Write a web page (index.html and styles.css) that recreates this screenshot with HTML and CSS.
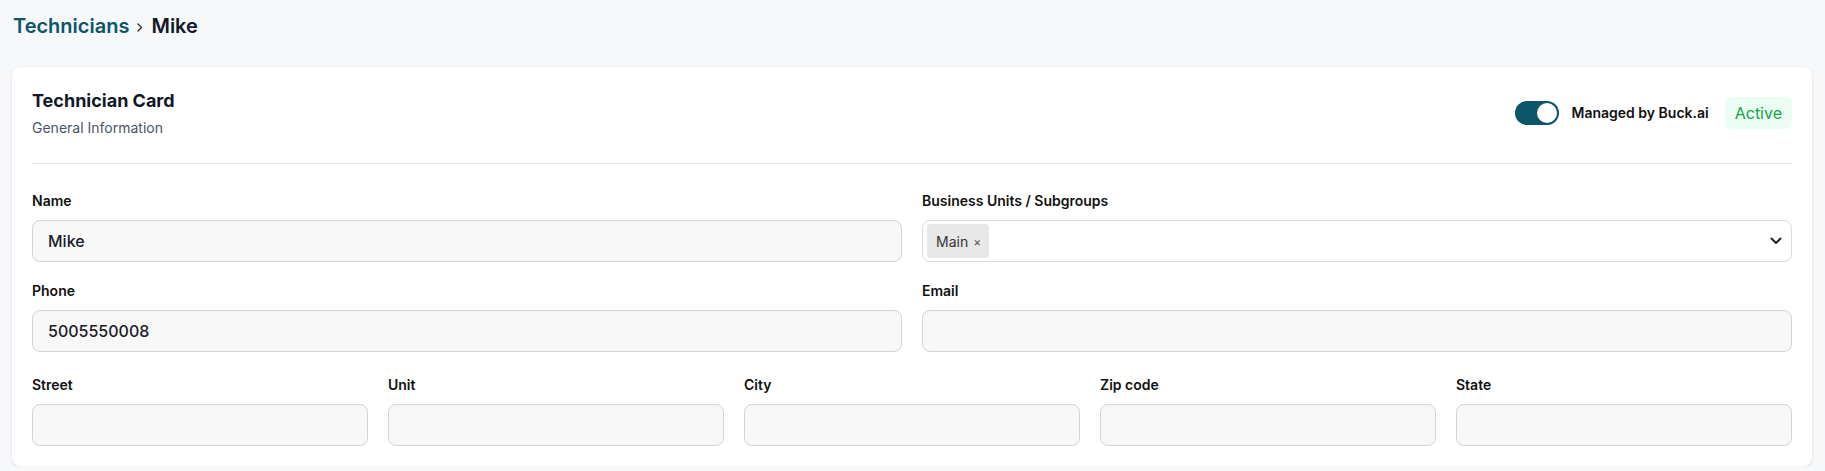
FILE: index.html
```html
<!DOCTYPE html>
<html lang="en">
<head>
<meta charset="utf-8">
<title>Technicians - Mike</title>
<link rel="stylesheet" href="styles.css">
</head>
<body>
<div class="page">
  <nav class="breadcrumb">
    <a class="crumb-link" href="#">Technicians</a>
    <svg class="crumb-sep" width="10" height="12" viewBox="0 0 10 12"><path d="M3 3 L6.5 6.5 L3 10" fill="none" stroke="#333" stroke-width="1.4" stroke-linecap="round" stroke-linejoin="round"/></svg>
    <span class="crumb-current">Mike</span>
  </nav>

  <section class="card">
    <header class="card-header">
      <div class="card-titles">
        <h1 class="card-title">Technician Card</h1>
        <p class="card-sub">General Information</p>
      </div>
      <div class="card-actions">
        <span class="toggle"><span class="toggle-knob"></span></span>
        <span class="toggle-label">Managed by Buck.ai</span>
        <span class="badge">Active</span>
      </div>
    </header>

    <div class="form">
      <div class="grid-2">
        <div class="field">
          <label class="label">Name</label>
          <div class="input">Mike</div>
        </div>
        <div class="field">
          <label class="label">Business Units / Subgroups</label>
          <div class="input select">
            <span class="tag">Main <span class="tag-x">×</span></span>
            <svg class="chev" width="12" height="8" viewBox="0 0 12 8"><path d="M1.5 1.5 L6 6 L10.5 1.5" fill="none" stroke="#222" stroke-width="2" stroke-linecap="round" stroke-linejoin="round"/></svg>
          </div>
        </div>
        <div class="field">
          <label class="label">Phone</label>
          <div class="input">5005550008</div>
        </div>
        <div class="field">
          <label class="label">Email</label>
          <div class="input"></div>
        </div>
      </div>
      <div class="grid-5">
        <div class="field">
          <label class="label">Street</label>
          <div class="input"></div>
        </div>
        <div class="field">
          <label class="label">Unit</label>
          <div class="input"></div>
        </div>
        <div class="field">
          <label class="label">City</label>
          <div class="input"></div>
        </div>
        <div class="field">
          <label class="label">Zip code</label>
          <div class="input"></div>
        </div>
        <div class="field">
          <label class="label">State</label>
          <div class="input"></div>
        </div>
      </div>
    </div>
  </section>
</div>
</body>
</html>
```

FILE: styles.css
```css
* { box-sizing: border-box; }
html, body { margin: 0; padding: 0; }
body {
  background: #f7f8fa;
  font-family: Inter, "Noto Sans", "Liberation Sans", sans-serif;
  color: #111827;
}
.page {
  padding: 12px 13px 0 12px;
}
.breadcrumb {
  display: flex;
  align-items: center;
  height: 28px;
  padding-left: 1px;
  font-size: 20px;
  font-weight: 600;
  line-height: 28px;
}
.crumb-link {
  color: #0b5669;
  text-decoration: none;
}
.crumb-sep {
  margin: 1px 6px 0 6px;
}
.crumb-current { color: #111827; }

.card {
  margin-top: 27px;
  background: #fff;
  border-radius: 8px;
  box-shadow: 0 1px 3px rgba(16, 24, 40, 0.10), 0 1px 2px rgba(16, 24, 40, 0.04);
  padding: 20px 20px 20px;
}
.card-header {
  display: flex;
  justify-content: space-between;
  align-items: center;
  padding-bottom: 25px;
  border-bottom: 1px solid #e5e7eb;
}
.card-title {
  margin: 0;
  font-size: 18px;
  line-height: 28px;
  font-weight: 700;
  color: #111827;
}
.card-sub {
  margin: 3px 0 0;
  font-size: 14px;
  line-height: 20px;
  color: #4b5563;
}
.card-actions {
  display: flex;
  align-items: center;
}
.toggle {
  width: 44px;
  height: 24px;
  border-radius: 12px;
  background: #0b5669;
  display: flex;
  align-items: center;
  justify-content: flex-end;
  padding: 2px;
}
.toggle-knob {
  width: 20px;
  height: 20px;
  border-radius: 50%;
  background: #fff;
}
.toggle-label {
  margin-left: 13px;
  font-size: 14px;
  font-weight: 600;
  color: #111;
}
.badge {
  margin-left: 16px;
  height: 32px;
  padding: 0 10px;
  display: flex;
  align-items: center;
  background: #ecfdf3;
  color: #16a34a;
  border-radius: 6px;
  font-size: 16px;
}

.form {
  padding-top: 27px;
}
.grid-2 {
  display: grid;
  grid-template-columns: 1fr 1fr;
  column-gap: 20px;
  row-gap: 19px;
}
.grid-5 {
  display: grid;
  grid-template-columns: repeat(5, 1fr);
  column-gap: 20px;
  margin-top: 23px;
}
.field {
  display: flex;
  flex-direction: column;
}
.label {
  font-size: 14px;
  line-height: 20px;
  font-weight: 600;
  color: #111;
  margin-bottom: 9px;
}
.input {
  height: 42px;
  border: 1px solid #d0d5dd;
  border-radius: 8px;
  background: #f8f8f8;
  padding: 0 15px;
  display: flex;
  align-items: center;
  font-size: 16px;
  font-weight: 500;
  color: #1b1b2a;
}
.select {
  background: #fff;
  border-color: #dcdcdf;
  padding: 0 9px 0 4px;
  justify-content: space-between;
}
.tag {
  height: 34px;
  padding: 0 8px 0 9px;
  display: flex;
  align-items: center;
  gap: 5px;
  background: #e8e8e8;
  border-radius: 4px;
  font-size: 14px;
  font-weight: 400;
  color: #333;
}
.tag-x {
  font-size: 12px;
  color: #555;
}
.chev { display: block; }
```
